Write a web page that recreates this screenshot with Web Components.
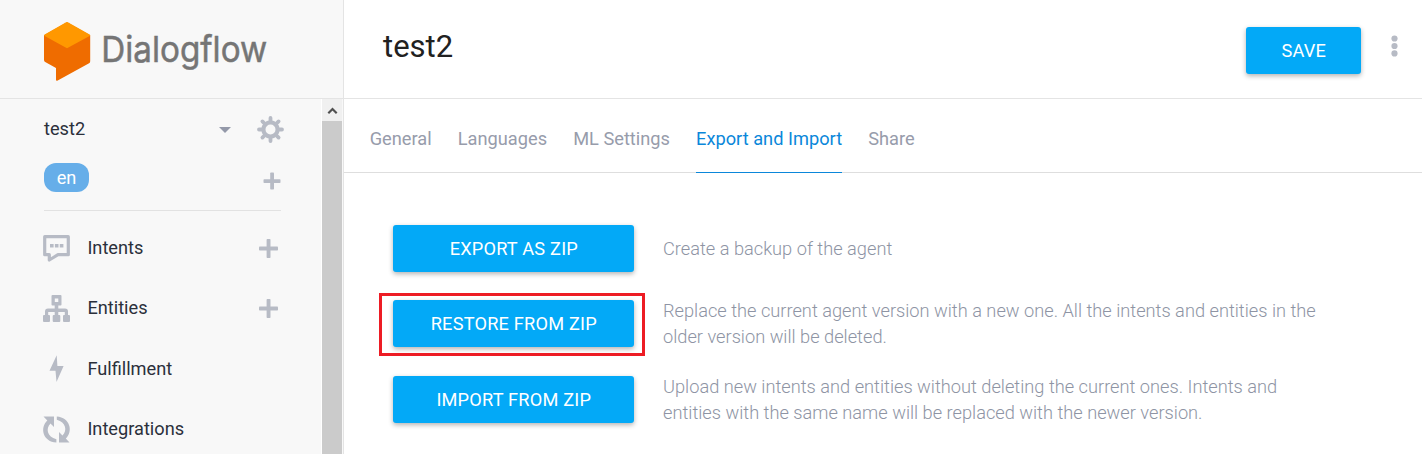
<!DOCTYPE html>
<html lang="en">
<head>
<meta charset="utf-8">
<title>Dialogflow</title>
<style>
html,body{margin:0;height:456px;overflow:hidden;background:#fff}
body{font-family:Roboto,"Liberation Sans",sans-serif}
</style>
</head>
<body>
<df-app></df-app>
<script>
const define = (name, html) => customElements.define(name, class extends HTMLElement {
  constructor() {
    super();
    const t = document.createElement('template');
    t.innerHTML = html;
    this.attachShadow({mode: 'open'}).append(t.content.cloneNode(true));
  }
});

const icons = {
  intents: '<path d="M1.7 1.7H25.3V19.7H15L6.3 25V19.7H1.7Z" fill="none" stroke="currentColor" stroke-width="3.2" stroke-linejoin="round"/><path d="M7 9h3.6v3.4H7zM11.9 9h3.6v3.4h-3.6zM16.8 9h3.6v3.4h-3.6z"/>',
  entities: '<path fill-rule="evenodd" d="M9.5 0h8q1 0 1 1v8.500q0 1-1 1h-2.200v3.100H22q3 0 3 3V20h1q1 0 1 1v5q0 1-1 1h-5q-1 0-1-1v-5q0-1 1-1h.8v-3.100h-6.500V20h1q1 0 1 1v5q0 1-1 1h-5.600q-1 0-1-1v-5q0-1 1-1h1v-3.100H5.200V20H6q1 0 1 1v5q0 1-1 1H1q-1 0-1-1v-5q0-1 1-1h1v-3.400q0-3 3-3h6.700v-3.100H9.500q-1 0-1-1V1q0-1 1-1Zm2.300 3.400v3.600h3.500V3.400Z"/>',
  fulfillment: '<path d="M13.700 .2L6.500 15.800H12.500L13.500 27 20.600 11H14.400Z"/>',
  integrations: '<path d="M.5.5H11V11L7.500 7.600C2.500 12.500 4 21 13.400 23.300V26.600C0 25.500-3.500 12 4.300 4.400Z"/><path d="M13.800.4C27 1.500 30.500 15 22.800 22.600L26.500 26.500H16V16L19.500 19.400C24.500 14.500 23 6 13.800 3.700Z"/>',
  plus: '<rect x="7.600" y="0" width="3.900" height="19" rx=".8"/><rect x="0" y="7.600" width="19" height="3.900" rx=".8"/>'
};
customElements.define('df-icon', class extends HTMLElement {
  constructor() {
    super();
    const n = this.getAttribute('name');
    const s = n === 'plus' ? 19 : 27;
    this.attachShadow({mode: 'open'}).innerHTML = `<style>:host{display:block;flex:none;color:#b7bbc5}svg{display:block;overflow:visible}</style><svg width="${s}" height="${s}" viewBox="0 0 ${s} ${s}" fill="currentColor">${icons[n] || ''}</svg>`;
  }
});

define('df-gear', `<style>:host{display:block;color:#b7bbc5}svg{display:block}</style>
<svg width="27" height="27" viewBox="-13.500 -13.500 27 27" fill="none" stroke="currentColor"><circle r="7.100" stroke-width="4.200"/>
<path stroke-width="3.800" stroke-linecap="round" d="M0-8.500V-11.500M0 8.500V11.500M-8.500 0H-11.500M8.500 0H11.500M6-6L8.100-8.100M-6-6L-8.100-8.100M6 6L8.100 8.100M-6 6L-8.100 8.100"/></svg>`);

define('df-logo', `<style>
:host{display:block;height:98px;border-bottom:1px solid #e4e4e4;box-sizing:content-box}
svg{display:block}
</style>
<svg width="343" height="98">
<path d="M67 22.300L90.200 35.200V61.300Q90.200 62.600 89.100 63.300L57.700 80.500Q56 81.400 56 79.700V68.100L45.200 62Q44 61.300 44 60V35.300Z" fill="#ef6c00"/>
<path d="M65.700 22.400Q67 21.700 68.300 22.400L89.600 34.400Q90.900 35.300 89.600 36.100L67 48.200 44.700 36.100Q43.400 35.300 44.700 34.400Z" fill="#ff9800"/>
<text x="101.200" y="61.700" font-family="Inter" font-size="35.500" fill="#757575" stroke="#757575" stroke-width=".5" textLength="166" lengthAdjust="spacingAndGlyphs">Dialogflow</text>
</svg>`);

define('df-nav-item', `<style>
:host{display:flex;align-items:center;height:60.300px;padding:0 0 0 43.400px;font-size:18.200px;line-height:26px;color:#2b303b}
.t{flex:1;padding-left:17px}
df-icon[name=plus]{margin:1px 43px 0 0}
:host(:not([add])) df-icon{display:none}
</style><slot name="icon"></slot><span class="t"><slot></slot></span><df-icon name="plus"></df-icon>`);

define('df-agent', `<style>
:host{display:block;padding-left:44px;height:119px}
.row{display:flex;align-items:center}
.a{height:58px;margin-bottom:2px;font-size:18.200px;color:#2b303b}
.a span{flex:1}
.caret{border:6px solid transparent;border-top-color:#9499a9;border-bottom:0;margin:4px 25.500px 0 0}
df-gear{margin:3px 37.500px 0 0}
.b{height:36px;justify-content:space-between}
.pill{box-sizing:border-box;width:45px;height:29px;border-radius:12px;background:#66aee9;color:#fff;font-size:18.200px;line-height:29px;text-align:center;font-weight:400}
svg{display:block;margin:7px 40px 0 0}
.rule{height:1px;background:#e2e2e2;width:237px;margin-top:15px}
</style>
<div class="row a"><span>test2</span><i class="caret"></i><df-gear></df-gear></div>
<div class="row b"><b class="pill">en</b><svg width="18" height="18" viewBox="0 0 18 18" fill="#b7bbc5"><rect x="7.200" y=".5" width="3.800" height="17" rx=".8"/><rect x=".5" y="7.200" width="17" height="3.800" rx=".8"/></svg></div>
<div class="rule"></div>`);

define('df-scrollbar', `<style>
:host{display:flex;flex-direction:column;width:20px;background:#f0f0f0;border-left:1px solid #fff}
svg{display:block;flex:none}
.thumb{flex:1;background:#cbcbcb}
</style><svg width="20" height="22"><path d="M6.300 14.200L10.500 10 14.700 14.200" fill="none" stroke="#505050" stroke-width="2.200"/></svg><div class="thumb"></div>`);

define('df-sidebar', `<style>
:host{display:flex;flex-direction:column;box-sizing:border-box;width:344px;height:454px;background:#f8f8f8;border-right:1px solid #e4e4e4;overflow:hidden}
.body{display:flex;flex:1;min-height:0}
.list{flex:1}
df-scrollbar{margin-right:1px}
</style><df-logo></df-logo><div class="body"><div class="list"><slot></slot></div><df-scrollbar></df-scrollbar></div>`);

define('df-button', `<style>
:host{display:block;box-sizing:border-box;height:47px;border-radius:3px;background:#03a9f7;color:#fff;font-size:18.200px;line-height:47px;text-align:center;letter-spacing:.2px;text-indent:.6px;box-shadow:0 2px 5px rgba(0,0,0,.3)}
</style><slot></slot>`);

define('df-header', `<style>
:host{display:flex;box-sizing:border-box;height:99px;border-bottom:1px solid #e4e4e4;padding:27px 24px 0 39px;align-items:flex-start}
h1{flex:1;margin:1px 0 0;font-size:31px;line-height:38px;font-weight:400;color:#212121}
df-button{width:115px}
svg{display:block;margin:8px 0 0 30px}
</style><h1><slot></slot></h1><df-button>SAVE</df-button><svg width="7" height="22" fill="#b7bbc5"><circle cx="3.500" cy="3.500" r="3.100"/><circle cx="3.500" cy="11" r="3.100"/><circle cx="3.500" cy="18.400" r="3.100"/></svg>`);

define('df-tab', `<style>
:host{display:block;box-sizing:border-box;height:74px;padding-top:27px;font-size:18.230px;line-height:26px;color:#979cab}
:host([active]){color:#0b87da;border-bottom:1px solid #0b87da}
</style><slot></slot>`);
define('df-tabs', `<style>
:host{display:flex;gap:26.150px;box-sizing:border-box;height:74px;border-bottom:1px solid #dedede;padding-left:25.700px}
</style><slot></slot>`);

define('df-action', `<style>
:host{display:grid;grid-template-columns:241px 670px;column-gap:29px;align-items:center;height:52px}
.b{position:relative;padding-bottom:1px}
:host([marked]) .b::after{content:"";position:absolute;left:-14px;top:-7px;width:260px;height:57px;border:3px solid #ed1c24}
.d{font-size:18.235px;line-height:26px;font-weight:300;color:#8e94a4;white-space:nowrap}
</style><div class="b"><df-button><slot name="label"></slot></df-button></div><div class="d"><slot></slot></div>`);

define('df-app', `<style>
:host{display:grid;grid-template-columns:344px 1fr;width:1422px;height:456px}
.actions{display:grid;grid-template-rows:75px 76px 52px;padding:50px 0 0 49px}
</style>
<df-sidebar>
<df-agent></df-agent>
<df-nav-item add><df-icon slot="icon" name="intents"></df-icon>Intents</df-nav-item>
<df-nav-item add><df-icon slot="icon" name="entities"></df-icon>Entities</df-nav-item>
<df-nav-item><df-icon slot="icon" name="fulfillment"></df-icon>Fulfillment</df-nav-item>
<df-nav-item><df-icon slot="icon" name="integrations"></df-icon>Integrations</df-nav-item>
</df-sidebar>
<main>
<df-header>test2</df-header>
<df-tabs><df-tab>General</df-tab><df-tab>Languages</df-tab><df-tab>ML Settings</df-tab><df-tab active>Export and Import</df-tab><df-tab>Share</df-tab></df-tabs>
<div class="actions">
<df-action><span slot="label">EXPORT AS ZIP</span>Create a backup of the agent</df-action>
<df-action marked><span slot="label">RESTORE FROM ZIP</span>Replace the current agent version with a new one. All the intents and entities in the<br>older version will be deleted.</df-action>
<df-action><span slot="label">IMPORT FROM ZIP</span>Upload new intents and entities without deleting the current ones. Intents and<br>entities with the same name will be replaced with the newer version.</df-action>
</div>
</main>`);
</script>
</body>
</html>
